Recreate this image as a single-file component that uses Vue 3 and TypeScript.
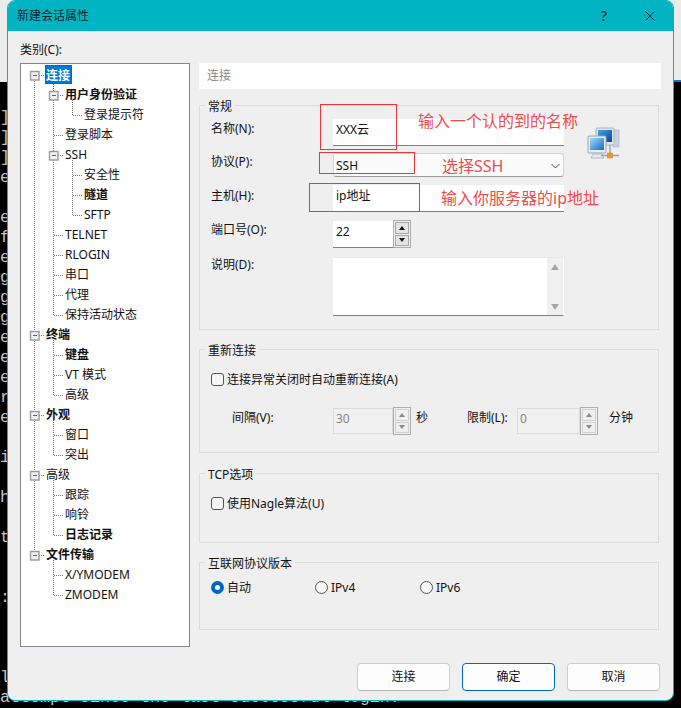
<script setup lang="ts">
import { computed } from 'vue'

interface Row { t: string; l: number; b?: boolean; sel?: boolean; exp?: boolean }

const rows: Row[] = [
  { t: '连接', l: 0, b: true, sel: true, exp: true },
  { t: '用户身份验证', l: 1, b: true, exp: true },
  { t: '登录提示符', l: 2 },
  { t: '登录脚本', l: 1 },
  { t: 'SSH', l: 1, exp: true },
  { t: '安全性', l: 2 },
  { t: '隧道', l: 2, b: true },
  { t: 'SFTP', l: 2 },
  { t: 'TELNET', l: 1 },
  { t: 'RLOGIN', l: 1 },
  { t: '串口', l: 1 },
  { t: '代理', l: 1 },
  { t: '保持活动状态', l: 1 },
  { t: '终端', l: 0, b: true, exp: true },
  { t: '键盘', l: 1, b: true },
  { t: 'VT 模式', l: 1 },
  { t: '高级', l: 1 },
  { t: '外观', l: 0, b: true, exp: true },
  { t: '窗口', l: 1 },
  { t: '突出', l: 1 },
  { t: '高级', l: 0, exp: true },
  { t: '跟踪', l: 1 },
  { t: '响铃', l: 1 },
  { t: '日志记录', l: 1, b: true },
  { t: '文件传输', l: 0, b: true, exp: true },
  { t: 'X/YMODEM', l: 1 },
  { t: 'ZMODEM', l: 1 }
]

const termLines = [
  ']', ']', ']', 'e', '', 'e', 'f', 'e', 'g', 'g', 'g', 'e', 'e', 'e', 'r', 'e', '', 'i', '', 'h', '', 't',
  '', '', ':', '', '', '', 'l', 'attempt since the last successful login.'
]

const yOf = (i: number) => 75 + 20 * i
const guideX = [34, 53, 72]
const textX = [45, 64, 83]

const connectors = computed(() => {
  let d = ''
  const lastChild = new Map<number, number>()
  const stack: number[] = []
  rows.forEach((r, i) => {
    stack.length = r.l
    if (r.l > 0) lastChild.set(stack[r.l - 1], i)
    else if (i > 0) lastChild.set(-1, i)
    stack[r.l] = i
    const x = guideX[r.l]
    d += `M${x + 1} ${yOf(i) + 0.5}H${textX[r.l] - 1}`
  })
  lastChild.forEach((end, parent) => {
    if (parent === -1) {
      d += `M${guideX[0] + 0.5} ${yOf(0)}V${yOf(end)}`
    } else {
      const x = guideX[rows[parent].l + 1]
      d += `M${x + 0.5} ${yOf(parent) + 5}V${yOf(end) + 1}`
    }
  })
  return d
})

const expanders = computed(() =>
  rows
    .map((r, i) => ({ r, i }))
    .filter(e => e.r.exp)
    .map(e => ({ x: guideX[e.r.l] - 4, y: yOf(e.i) - 4 }))
)
</script>

<template>
  <div class="stage">
    <div class="terminal" aria-hidden="true">
      <div class="term-top"></div>
      <div class="term-lines">
        <div v-for="(l, i) in termLines" :key="i" class="term-line">{{ l }}</div>
      </div>
    </div>

    <div class="dialog">
      <div class="title">
        <span class="title-text">新建会话属性</span>
        <span class="help">?</span>
        <svg class="close" width="10" height="10" viewBox="0 0 10 10">
          <path d="M0.5 0.5L9.5 9.5M9.5 0.5L0.5 9.5" stroke="#10282c" stroke-width="1" fill="none" />
        </svg>
      </div>

      <div class="body">
        <div class="cat-label">类别(C):</div>
        <div class="main">
          <div class="tree">
            <svg class="tree-lines" viewBox="21 64 168 582" width="168" height="582" aria-hidden="true">
              <path :d="connectors" fill="none" stroke="#777" stroke-width="1" stroke-dasharray="1 1" shape-rendering="crispEdges" />
              <g v-for="(e, i) in expanders" :key="i">
                <rect :x="e.x + 0.5" :y="e.y + 0.5" width="8.5" height="8.5" fill="#f0f0f0" stroke="#9a9a9a" stroke-width="1.4" />
                <path :d="`M${e.x + 2.5} ${e.y + 4.5}H${e.x + 7}`" stroke="#4a5f9c" stroke-width="1" shape-rendering="crispEdges" />
              </g>
            </svg>
            <div v-for="(r, i) in rows" :key="i" class="tree-row" :class="'lv' + r.l">
              <span class="tree-text" :class="{ bold: r.b, selected: r.sel }">{{ r.t }}</span>
            </div>
          </div>

          <div class="panel">
            <div class="band">连接</div>

            <section class="group g-general">
              <div class="legend">常规</div>
              <div class="form-row r-name">
                <label class="lbl">名称(N):</label>
                <div class="field wide">XXX云</div>
              </div>
              <div class="form-row r-proto">
                <label class="lbl">协议(P):</label>
                <div class="select">
                  <span class="select-text">SSH</span>
                  <svg width="9" height="6" viewBox="0 0 9 6"><path d="M0.5 1L4.5 5L8.5 1" fill="none" stroke="#444" stroke-width="1" /></svg>
                </div>
              </div>
              <div class="form-row r-host">
                <label class="lbl">主机(H):</label>
                <div class="field wide">ip地址</div>
              </div>
              <div class="form-row r-port">
                <label class="lbl">端口号(O):</label>
                <div class="field short">22</div>
                <div class="spin">
                  <div class="spin-btn"><i class="tri up"></i></div>
                  <div class="spin-btn"><i class="tri down"></i></div>
                </div>
              </div>
              <div class="form-row r-desc">
                <label class="lbl">说明(D):</label>
                <div class="memo">
                  <div class="memo-bar">
                    <i class="sb up"></i>
                    <i class="sb down"></i>
                  </div>
                </div>
              </div>
              <svg class="net-icon" width="34" height="34" viewBox="0 0 34 34" aria-hidden="true">
                <defs>
                  <linearGradient id="scr" x1="0" y1="0" x2="1" y2="1">
                    <stop offset="0" stop-color="#3aa7ea" />
                    <stop offset="1" stop-color="#0d3f9e" />
                  </linearGradient>
                  <linearGradient id="scr2" x1="0" y1="0" x2="1" y2="1">
                    <stop offset="0" stop-color="#9fdcf8" />
                    <stop offset="1" stop-color="#1668c4" />
                  </linearGradient>
                </defs>
                <rect x="26" y="3" width="6" height="17" fill="#c8d4e0" stroke="#a4b0bc" stroke-width="0.6" />
                <rect x="9" y="1" width="18" height="17" rx="1" fill="#dfe6ec" stroke="#aab4be" />
                <rect x="11" y="3" width="14" height="12" fill="url(#scr)" />
                <rect x="1" y="9" width="18" height="17" rx="1" fill="#e6ecf0" stroke="#9ba6b0" />
                <rect x="3" y="11" width="14" height="12" fill="url(#scr2)" />
                <path d="M6 27H15L17 31H4Z" fill="#e6eaee" stroke="#a5aeb6" stroke-width="0.8" />
                <path d="M14 28.5H32" stroke="#98a2aa" stroke-width="1.4" />
                <path d="M23 18V27" stroke="#98a2aa" stroke-width="1.4" />
                <rect x="20.5" y="26" width="5" height="5" fill="#f09a1a" stroke="#c77a10" stroke-width="0.5" />
              </svg>
            </section>

            <section class="group g-reconnect">
              <div class="legend">重新连接</div>
              <div class="check-row">
                <span class="check"></span>
                <span class="opt-text">连接异常关闭时自动重新连接(A)</span>
              </div>
              <div class="retry-row">
                <label class="lbl retry-lbl">间隔(V):</label>
                <div class="field short disabled">30</div>
                <div class="spin off">
                  <div class="spin-btn"><i class="tri up"></i></div>
                  <div class="spin-btn"><i class="tri down"></i></div>
                </div>
                <span class="unit-sec">秒</span>
                <label class="lbl limit-lbl">限制(L):</label>
                <div class="field limit disabled">0</div>
                <div class="spin off">
                  <div class="spin-btn"><i class="tri up"></i></div>
                  <div class="spin-btn"><i class="tri down"></i></div>
                </div>
                <span class="unit-min">分钟</span>
              </div>
            </section>

            <section class="group g-tcp">
              <div class="legend">TCP选项</div>
              <div class="check-row">
                <span class="check"></span>
                <span class="opt-text">使用Nagle算法(U)</span>
              </div>
            </section>

            <section class="group g-ip">
              <div class="legend">互联网协议版本</div>
              <div class="radio-row">
                <div class="radio-item first"><span class="radio on"></span><span class="opt-text">自动</span></div>
                <div class="radio-item second"><span class="radio"></span><span class="opt-text">IPv4</span></div>
                <div class="radio-item"><span class="radio"></span><span class="opt-text">IPv6</span></div>
              </div>
            </section>
          </div>
        </div>

        <div class="actions">
          <button class="btn" type="button">连接</button>
          <button class="btn primary" type="button">确定</button>
          <button class="btn" type="button">取消</button>
        </div>
      </div>
    </div>

    <div class="mark m-name"></div>
    <div class="mark m-proto"></div>
    <div class="mark m-host"></div>
    <div class="note n-name">输入一个认的到的名称</div>
    <div class="note n-proto">选择SSH</div>
    <div class="note n-host">输入你服务器的ip地址</div>
  </div>
</template>

<style scoped>
.stage {
  position: relative;
  width: 681px;
  height: 708px;
  overflow: hidden;
  background: #000;
  font-family: "Noto Sans", "Noto Sans CJK SC", sans-serif;
  font-size: 12px;
  line-height: 18px;
  color: #111;
}

.terminal {
  position: absolute;
  inset: 0;
}
.term-top {
  height: 82px;
  background: linear-gradient(#0a78c8, #0a78c8) right bottom / 7px 2px no-repeat, #ebebeb;
}
.term-lines {
  padding-top: 26px;
  font-family: "Liberation Mono", monospace;
  font-size: 16.67px;
  line-height: 20px;
  color: #c4c4c4;
  white-space: pre;
}
.term-line {
  height: 20px;
}

.dialog {
  position: relative;
  box-sizing: border-box;
  width: 667px;
  height: 701px;
  margin-left: 7px;
  background: #efefef;
  border: 1px solid #00b4c4;
  border-radius: 8px;
  overflow: hidden;
}

.title {
  display: flex;
  align-items: center;
  height: 30px;
  padding-left: 9px;
  background: #00b4c4;
  color: #10282c;
}
.title-text {
  flex: 1;
}
.help {
  margin-right: 38px;
  font-size: 14px;
  font-weight: 500;
}
.close {
  margin-right: 18px;
}

.body {
  padding: 10px 13px 0 12px;
}
.cat-label {
  height: 22px;
  line-height: 18px;
}
.main {
  display: grid;
  grid-template-columns: 170px 462px;
  column-gap: 9px;
}

.tree {
  position: relative;
  box-sizing: border-box;
  height: 584px;
  background: #fff;
  border: 1px solid #85858d;
}
.tree-lines {
  position: absolute;
  left: 0;
  top: 0;
}
.tree-row {
  position: relative;
  height: 20px;
  line-height: 22px;
  white-space: nowrap;
}
.lv0 { padding-left: 25px; }
.lv1 { padding-left: 44px; }
.lv2 { padding-left: 63px; }
.tree-text {
  display: inline-block;
  height: 20px;
}
.tree-text.bold {
  font-weight: 700;
}
.tree-text.selected {
  box-sizing: border-box;
  height: 19px;
  margin: 1px 0 0 -1px;
  padding: 0 1px 0 0;
  line-height: 19px;
  color: #fff;
  background: #0078d7;
  border: 1px dotted #6a4510;
  vertical-align: top;
}

.band {
  height: 26px;
  padding-left: 8px;
  line-height: 25px;
  color: #858585;
  background: #fff;
}

.group {
  position: relative;
  box-sizing: border-box;
  width: 460px;
  padding-left: 11px;
  border: 1px solid #dcdcdc;
}
.g-general { height: 225px; margin-top: 16px; }
.g-reconnect { height: 104px; margin-top: 19px; }
.g-tcp { height: 70px; margin-top: 20px; }
.g-ip { height: 68px; margin-top: 19px; }

.legend {
  box-sizing: border-box;
  width: fit-content;
  height: 16px;
  margin: -8px 0 0 -6px;
  padding: 0 3px;
  line-height: 18px;
  background: #efefef;
}

.form-row {
  display: flex;
  align-items: flex-start;
}
.r-name { margin-top: 5px; }
.r-proto { margin-top: 7px; }
.r-host { margin-top: 8px; }
.r-port { margin-top: 9px; }
.r-desc { margin-top: 9px; }

.lbl {
  flex: none;
  width: 122px;
  height: 18px;
  margin-top: 1px;
}
.r-proto .lbl { margin-top: 0; }
.r-host .lbl { margin-top: 2px; }
.r-port .lbl { margin-top: 0; }
.r-desc .lbl { margin-top: -1px; }

.field {
  box-sizing: border-box;
  padding-left: 3px;
  background: #fff;
  border-bottom: 1px solid #808080;
}
.wide {
  width: 231px;
  height: 27px;
  line-height: 22px;
}
.short {
  width: 60px;
  height: 27px;
  line-height: 22px;
}
.limit {
  width: 63px;
  height: 26px;
}
.field.disabled {
  height: 26px;
  line-height: 20px;
  color: #858585;
  background: #f0f0f0;
  border: 1px solid #dadada;
  padding-left: 2px;
}

.select {
  box-sizing: border-box;
  display: flex;
  align-items: center;
  justify-content: space-between;
  width: 231px;
  height: 24px;
  padding: 0 3px 0 2px;
  background: #fbfbfb;
  border: 1px solid #d4d4d4;
  border-bottom-color: #9c9c9c;
  border-radius: 3px;
}
.select-text {
  margin-top: 2px;
}
.select svg {
  margin-top: 2px;
}

.spin {
  box-sizing: border-box;
  display: flex;
  flex-direction: column;
  gap: 1px;
  width: 18px;
  height: 28px;
  margin-top: -1px;
  padding: 1px;
  border: 1px solid #adadad;
  background: #efefef;
}
.spin-btn {
  flex: 1;
  display: flex;
  align-items: center;
  justify-content: center;
  background: #e4e4e4;
  border: 1px solid #a8a8a8;
}
.spin.off .spin-btn {
  background: #efefef;
  border-color: #d0d0d0;
}
.tri {
  width: 0;
  height: 0;
  border-left: 3.5px solid transparent;
  border-right: 3.5px solid transparent;
}
.tri.up { border-bottom: 4px solid #111; }
.tri.down { border-top: 4px solid #111; }
.spin.off .tri.up { border-bottom-color: #8a8a8a; }
.spin.off .tri.down { border-top-color: #8a8a8a; }

.memo {
  box-sizing: border-box;
  display: flex;
  justify-content: flex-end;
  width: 231px;
  height: 59px;
  background: #fff;
  border-bottom: 1px solid #808080;
  border-top: 1px solid #e8e8e8;
  border-right: 1px solid #fff;
}
.memo-bar {
  display: flex;
  flex-direction: column;
  align-items: center;
  justify-content: space-between;
  box-sizing: border-box;
  width: 16px;
  padding: 6px 0 5px;
  background: #f0f0f0;
}
.sb {
  width: 0;
  height: 0;
  border-left: 4px solid transparent;
  border-right: 4px solid transparent;
}
.sb.up { border-bottom: 6px solid #a6a6a6; }
.sb.down { border-top: 6px solid #a6a6a6; }

.net-icon {
  position: absolute;
  left: 387px;
  top: 21px;
}

.check-row {
  display: flex;
  align-items: center;
  gap: 3px;
  height: 18px;
  margin-top: 12px;
}
.opt-text {
  margin-top: 2px;
}
.check {
  box-sizing: border-box;
  width: 13px;
  height: 13px;
  border: 1px solid #555;
  border-radius: 3px;
  background: #f6f6f6;
}

.retry-row {
  display: flex;
  align-items: flex-start;
  margin-top: 20px;
  padding-left: 21px;
  line-height: 18px;
}
.retry-lbl {
  width: 101px;
}
.unit-sec {
  margin: 1px 0 0 5px;
  width: 12px;
}
.limit-lbl {
  width: 50px;
  margin-left: 39px;
}
.unit-min {
  margin: 1px 0 0 11px;
}

.radio-row {
  display: flex;
  align-items: center;
  height: 18px;
  margin-top: 7px;
}
.radio-item {
  display: flex;
  align-items: center;
  gap: 3px;
}
.radio-item.first { width: 104px; }
.radio-item.second { width: 105px; }
.radio {
  box-sizing: border-box;
  width: 13px;
  height: 13px;
  border: 1px solid #555;
  border-radius: 50%;
  background: #f6f6f6;
}
.radio.on {
  background: #fff;
  border: 4px solid #0067c0;
}

.actions {
  display: flex;
  justify-content: flex-end;
  gap: 12px;
  margin-top: 16px;
}
.btn {
  box-sizing: border-box;
  width: 93px;
  height: 28px;
  padding: 0;
  font: inherit;
  color: #111;
  background: #fdfdfd;
  border: 1px solid #cfcfcf;
  border-bottom-color: #b5b5b5;
  border-radius: 4px;
}
.btn.primary {
  border: 1px solid #0067c0;
}

.mark {
  position: absolute;
  box-sizing: border-box;
  border: 1px solid #e8383d;
}
.m-name { left: 320px; top: 104px; width: 77px; height: 46px; }
.m-proto { left: 319px; top: 152px; width: 96px; height: 22px; }
.m-host { left: 309px; top: 183px; width: 111px; height: 29px; }

.note {
  position: absolute;
  font-size: 16px;
  line-height: 22px;
  color: #f44a4a;
  white-space: nowrap;
}
.n-name { left: 418px; top: 110px; }
.n-proto { left: 442px; top: 155px; }
.n-host { left: 441px; top: 187px; }
</style>
